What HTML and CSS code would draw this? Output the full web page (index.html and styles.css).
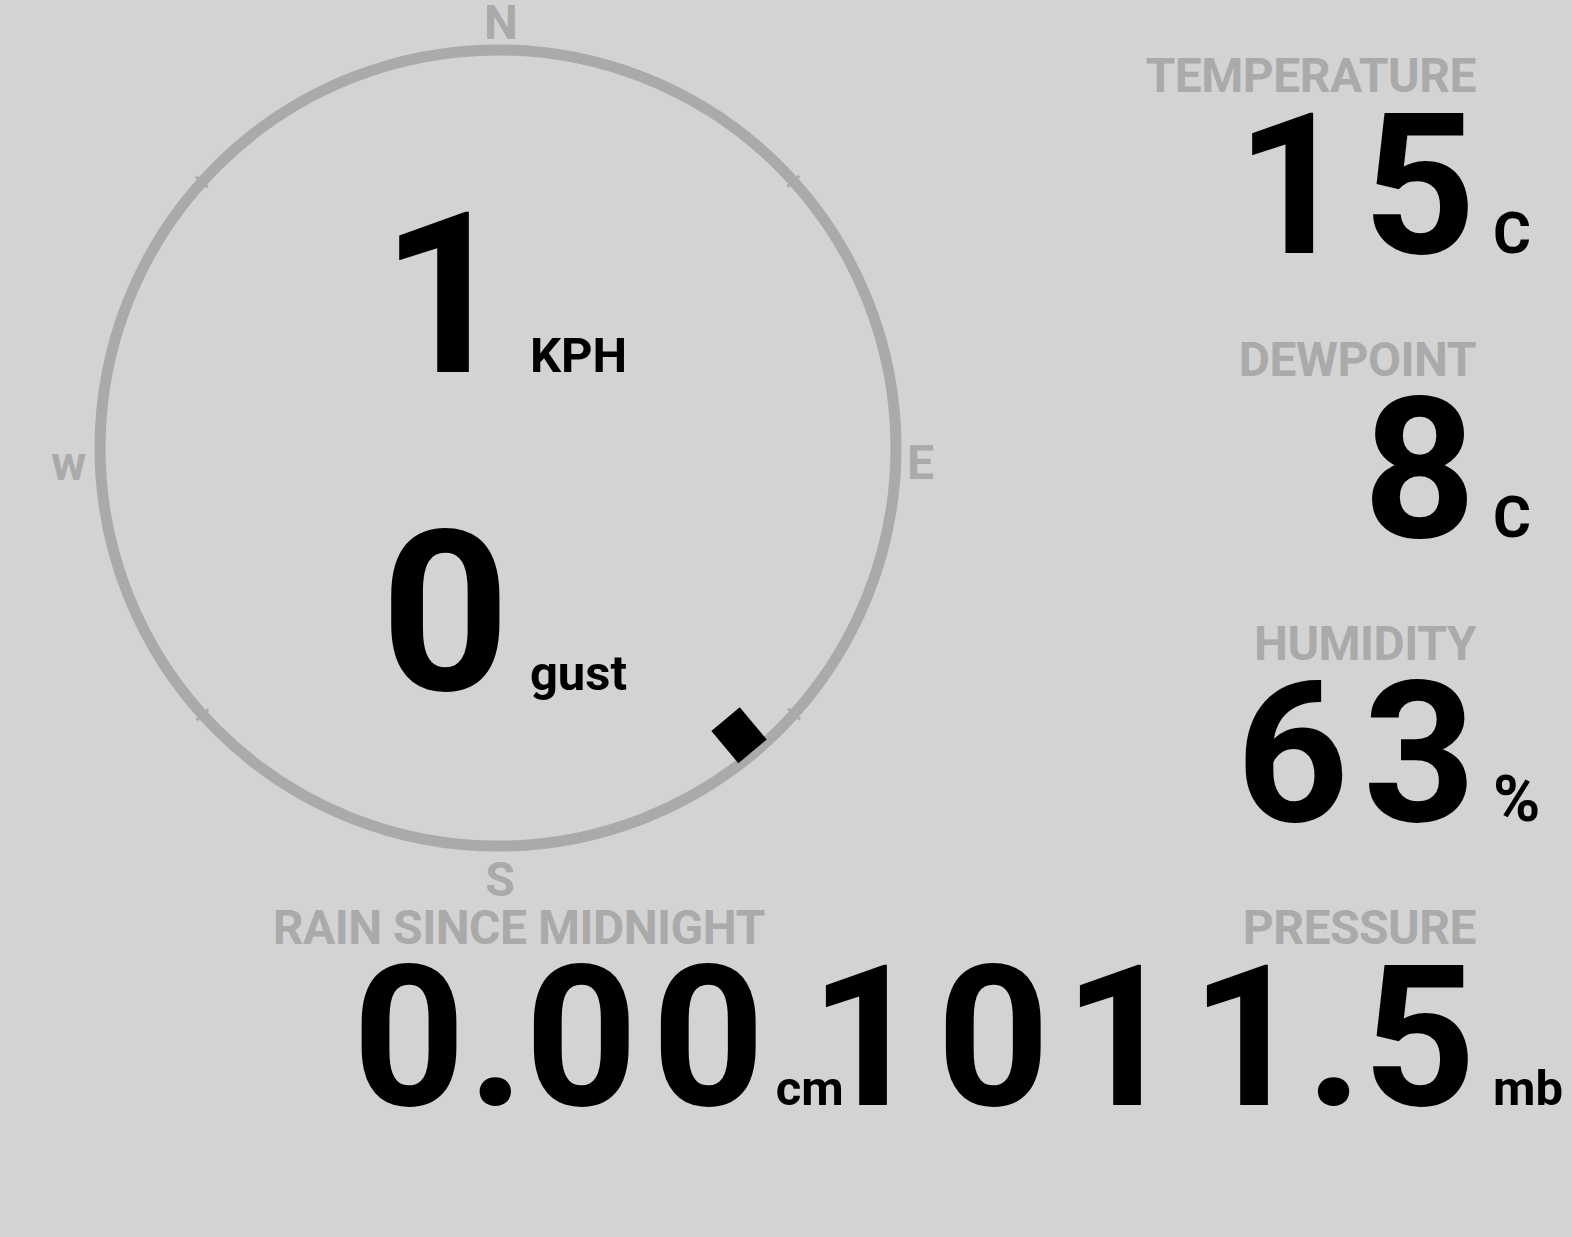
FILE: index.html
```html
<!DOCTYPE html>
<html lang="en">
<head>
    <meta charset="UTF-8">
    <meta name="viewport" content="width=device-width, initial-scale=1.0">
    <title>Weather Station</title>
    <link rel="stylesheet" href="styles.css">
</head>
<body>
    <div class="station">
        <div class="compass">
            <svg class="dial" viewBox="0 0 996 904" width="996" height="904">
                <circle cx="498" cy="448" r="398" fill="none" stroke="#aaa" stroke-width="11"/>
                <g fill="#aaa">
                    <rect x="496" y="42" width="3" height="16" transform="rotate(48 498 448)"/>
                    <rect x="496" y="42" width="3" height="16" transform="rotate(132 498 448)"/>
                    <rect x="496" y="42" width="3" height="16" transform="rotate(228 498 448)"/>
                    <rect x="496" y="42" width="3" height="16" transform="rotate(312 498 448)"/>
                </g>
                <rect class="pointer" x="479.5" y="52" width="37" height="42" transform="rotate(140 498 448)"/>
            </svg>
            <span class="point north">N</span>
            <span class="point east">E</span>
            <span class="point south">S</span>
            <span class="point west">w</span>

            <div class="dial-readings">
                <span class="big">1</span>
                <span class="unit">KPH</span>
                <span class="big">0</span>
                <span class="unit">gust</span>
            </div>
        </div>

        <div class="readings">
            <div class="reading">
                <span class="label">TEMPERATURE</span>
                <span class="value">15</span>
                <span class="unit wide">C</span>
            </div>
            <div class="reading">
                <span class="label">DEWPOINT</span>
                <span class="value">8</span>
                <span class="unit wide">C</span>
            </div>
            <div class="reading">
                <span class="label">HUMIDITY</span>
                <span class="value">63</span>
                <span class="unit percent">%</span>
            </div>
        </div>

        <div class="bottom-row">
            <div class="reading rain">
                <span class="label">RAIN SINCE MIDNIGHT</span>
                <span class="value">0<span class="dot">.</span>00</span>
                <span class="unit">cm</span>
            </div>
            <div class="reading">
                <span class="label">PRESSURE</span>
                <span class="value">1011<span class="dot">.</span>5</span>
                <span class="unit">mb</span>
            </div>
        </div>
    </div>
</body>
</html>
```

FILE: styles.css
```css
body {
    margin: 0;
    background-color: #d3d3d3;
    font-family: Roboto, "Liberation Sans", sans-serif;
    font-weight: 700;
    color: #000;
}
.station {
    display: grid;
    grid-template-columns: 996px 1fr;
    grid-template-rows: 904px auto;
    width: 1571px;
}
.compass {
    position: relative;
}
.dial {
    position: absolute;
    left: 0;
    top: 0;
}
.pointer {
    fill: #000;
}
.point {
    position: absolute;
    font-size: 48px;
    line-height: 46px;
    color: #aaa;
}
.north {
    left: 501px;
    top: 0;
    transform: translateX(-50%);
}
.south {
    left: 500px;
    top: 857px;
    transform: translateX(-50%);
}
.east {
    left: 907px;
    top: 440px;
}
.west {
    left: 51px;
    top: 441px;
}
.dial-readings {
    position: relative;
    display: grid;
    grid-template-columns: auto auto;
    justify-content: center;
    justify-items: start;
    align-items: baseline;
    column-gap: 20px;
    row-gap: 138px;
    padding-top: 205px;
    padding-left: 12px;
}
.big {
    font-size: 225px;
    line-height: 180px;
    justify-self: end;
}
.unit {
    font-size: 49px;
    line-height: 49px;
}
.unit.wide {
    font-size: 58px;
}
.unit.percent {
    font-size: 64px;
}
.readings {
    display: flex;
    flex-direction: column;
    align-items: flex-end;
    gap: 75px;
    padding-top: 52px;
    padding-right: 6px;
}
.reading {
    display: grid;
    grid-template-columns: auto 72px;
    column-gap: 17px;
    justify-items: end;
    align-items: baseline;
}
.reading .unit {
    justify-self: start;
}
.label {
    grid-column: 1;
    font-size: 48px;
    line-height: 48px;
    letter-spacing: -0.5px;
    color: #aaa;
    margin-bottom: 11px;
}
.value {
    grid-column: 1;
    font-size: 197px;
    line-height: 150px;
    letter-spacing: 14px;
    margin-right: -14px;
}
.dot {
    letter-spacing: 0;
    margin-left: -12px;
}
.bottom-row {
    grid-column: 1 / -1;
    display: flex;
    justify-content: flex-end;
    padding-right: 6px;
}
.rain {
    column-gap: 11px;
    grid-template-columns: auto 62px;
    margin-right: -28px;
}
```
